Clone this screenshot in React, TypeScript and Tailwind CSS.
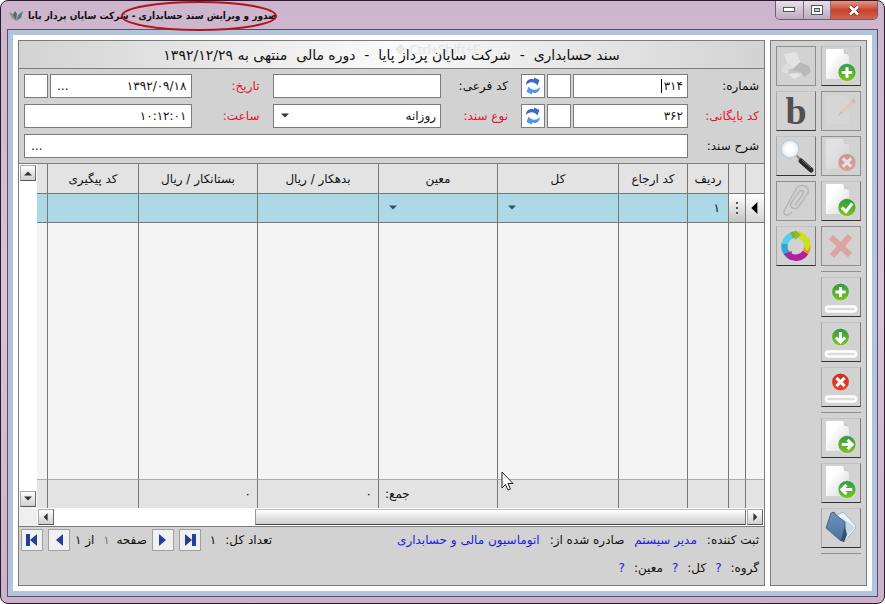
import type { ReactNode } from "react";

type Badge = "plus" | "check" | "cross" | "right" | "left" | "down";

function BadgeMark({ kind, cx, cy, r }: { kind: Badge; cx: number; cy: number; r: number }) {
  const red = kind === "cross";
  const k = r * 0.58;
  const d = {
    plus: `M${-k} 0H${k}M0 ${-k}V${k}`,
    check: `M${-k} 0L${-k * 0.2} ${k * 0.8}L${k} ${-k * 0.8}`,
    cross: `M${-k * 0.8} ${-k * 0.8}L${k * 0.8} ${k * 0.8}M${k * 0.8} ${-k * 0.8}L${-k * 0.8} ${k * 0.8}`,
    right: `M${-k} 0H${k}M${k * 0.1} ${-k * 0.9}L${k} 0L${k * 0.1} ${k * 0.9}`,
    left: `M${k} 0H${-k}M${-k * 0.1} ${-k * 0.9}L${-k} 0L${-k * 0.1} ${k * 0.9}`,
    down: `M0 ${-k}V${k}M${-k * 0.9} ${k * 0.1}L0 ${k}L${k * 0.9} ${k * 0.1}`,
  }[kind];
  return (
    <g transform={`translate(${cx} ${cy})`}>
      <circle r={r} fill={red ? "url(#badge-red)" : "url(#badge-green)"} stroke="#f4f4f4" strokeWidth="0.5" />
      <path d={d} fill="none" stroke="#fff" strokeWidth={r * 0.34} />
    </g>
  );
}

function DocIcon({ kind }: { kind: Badge }) {
  return (
    <svg width="38" height="38" viewBox="0 0 38 38" aria-hidden="true">
      <path d="M4 3Q4 2 5 2H21Q23 2 25 5Q27 7 27 10V32H4Z" fill="url(#paper)" />
      <path d="M21 2Q23 4 22 7Q25 6 27 9Q26 5 24 4Q23 2 21 2Z" fill="#c9c9c9" />
      <BadgeMark kind={kind} cx={25} cy={25.5} r={9} />
    </svg>
  );
}

function RowIcon({ kind }: { kind: Badge }) {
  return (
    <svg width="38" height="38" viewBox="0 0 38 38" aria-hidden="true">
      <BadgeMark kind={kind} cx={18.5} cy={14} r={8.8} />
      <rect x="4" y="28.500" width="30" height="5" rx="2.500" fill="#dcdcdc" stroke="#fff" strokeWidth="2.500" />
    </svg>
  );
}

function PrinterIcon() {
  return (
    <svg width="38" height="38" viewBox="0 0 38 38" aria-hidden="true">
      <path d="M7 7L19 5L24 16L17 21L11 18Z" fill="#e4e4e4" />
      <path d="M6 18L12 16L17 22L12 27L5 25Z" fill="#dedede" />
      <path d="M17 21L23 15L32 19L34 25L27 30L24 25L15 24Z" fill="#b7b9ba" />
      <path d="M12 22L17 21L15 24L24 25L20 29L11 27Z" fill="#c6c8c9" />
      <path d="M11 27L20 26L25 28L17 32Z" fill="#e6e6e6" />
    </svg>
  );
}

function PencilIcon() {
  return (
    <svg width="38" height="38" viewBox="0 0 38 38" aria-hidden="true">
      <path d="M4 3H22L27 8V32H4Z" fill="#d6d6d6" />
      <path d="M16 24L19 19L30 8L33 11L21 21Z" fill="#dfcbb5" />
      <path d="M16 24L19 19L21 21Z" fill="#c9bdb2" />
      <path d="M29 9L31 6L34 9L32 12Z" fill="#d0bdb8" />
    </svg>
  );
}

function SearchIcon() {
  return (
    <svg width="38" height="38" viewBox="0 0 38 38" aria-hidden="true">
      <path d="M19 18L24 23" stroke="#888" strokeWidth="2" />
      <path d="M24 24L34 33" stroke="#2b2b2b" strokeWidth="5" strokeLinecap="round" />
      <path d="M25 23L34 31" stroke="#777" strokeWidth="1" />
      <circle cx="13" cy="12" r="9" fill="url(#lens)" stroke="#c0ccd4" strokeWidth="1.400" />
    </svg>
  );
}

function ClipIcon() {
  return (
    <svg width="38" height="38" viewBox="0 0 38 38" aria-hidden="true">
      <path
        d="M7 29L19 7C22 1 33 3 31 11L22 24C19 29 12 26 14 21L22 10C24 7 28 9 26 12L18 23M7 29C6 34 12 34 15 30"
        fill="none"
        stroke="#b4b6b8"
        strokeWidth="1.500"
      />
    </svg>
  );
}

function WheelIcon() {
  return (
    <svg width="38" height="38" viewBox="0 0 38 38" aria-hidden="true">
      <g fill="none" strokeWidth="6.500">
        <path d="M19 7.500A11.500 11.500 0 0 1 30.500 19" stroke="#c8e01e" />
        <path d="M30.500 18.500A11.500 11.500 0 0 1 28.500 25.500" stroke="#e89a1c" />
        <path d="M28.500 25.500A11.500 11.500 0 0 1 12 28.500" stroke="#b01fa0" />
        <path d="M12 28.500A11.500 11.500 0 0 1 8 16" stroke="#35a6cf" />
        <path d="M8 17A11.500 11.500 0 0 1 15 8.500" stroke="#52d0ec" />
        <path d="M14.500 8.500A11.500 11.500 0 0 1 20 7.500" stroke="#78b23c" />
      </g>
      <path d="M18 3L24 8L18 13Z" fill="#8fbd2e" />
      <path d="M26 18H34L30 24Z" fill="#c8e01e" />
      <path d="M15 24L13 33L7 27Z" fill="#b01fa0" />
    </svg>
  );
}

function DeleteIcon() {
  return (
    <svg width="38" height="38" viewBox="0 0 38 38" aria-hidden="true">
      <path d="M9 10L28 28M28 9L10 29" stroke="#dda5a1" strokeWidth="6" fill="none" />
    </svg>
  );
}

function FolderIcon() {
  return (
    <svg width="38" height="38" viewBox="0 0 38 38" aria-hidden="true">
      <path d="M15 6L21 3L34 17L33 20L22 33Z" fill="#eef4f9" stroke="#9aabba" strokeWidth="0.800" />
      <path d="M19 8L33 18L23 29Z" fill="#c7d8e6" />
      <path d="M9 4L12 3L14 6L23 13L23 18L19 32L4 19Z" fill="url(#folder)" stroke="#37567a" strokeWidth="0.800" />
      <path d="M19 32L23 17L25 26L22 33Z" fill="#33506f" />
    </svg>
  );
}

function RefreshIcon() {
  return (
    <svg width="16" height="18" viewBox="0 0 16 18" aria-hidden="true">
      <path d="M1 8C1 3 5 1 9 2.500L9 0.500L14.500 3L12.500 8.500L10.500 6.500C7 4.500 4 5 1 8Z" fill="#3a6cc4" />
      <path d="M15 10C15 15 11 17 7 15.500L7 17.500L1.500 15L3.500 9.500L5.500 11.500C9 13.500 12 13 15 10Z" fill="#5596e8" />
    </svg>
  );
}

function Triangle({ dir, size, color }: { dir: "up" | "down" | "left" | "right"; size: number; color: string }) {
  const pts = { up: "0,8 5,3 10,8", down: "0,2 5,7 10,2", left: "7,0 2,5 7,10", right: "3,0 8,5 3,10" }[dir];
  return (
    <svg width={size} height={size} viewBox="0 0 10 10" aria-hidden="true" className="shrink-0">
      <polygon points={pts} fill={color} />
    </svg>
  );
}

function NavIcon({ dir, bar }: { dir: "left" | "right"; bar?: boolean }) {
  return (
    <svg width="16" height="16" viewBox="0 0 16 16" aria-hidden="true">
      <g fill="#21409a" transform={dir === "right" ? "translate(16 0) scale(-1 1)" : undefined}>
        {bar ? <path d="M2 2H6V14H2ZM13 2V14L6 8Z" /> : <path d="M12 2V14L5 8Z" />}
      </g>
    </svg>
  );
}

function ToolButton({ label, disabled, children }: { label: string; disabled?: boolean; children: ReactNode }) {
  return (
    <button
      type="button"
      aria-label={label}
      disabled={disabled}
      className={
        disabled
          ? "flex size-10 items-center justify-center border border-[#8f8f8f]"
          : "flex size-10 items-center justify-center border border-t-[#c2c2c2] border-r-[#777] border-b-[#333] border-l-[#a8a8a8]"
      }
    >
      {children}
    </button>
  );
}

const box = "h-6 border border-[#7b7b7b] bg-white";
const iconBox = "flex h-6 w-6 shrink-0 items-center justify-center border border-[#7b7b7b] bg-white";
const scrollBtn =
  "flex size-4 shrink-0 items-center justify-center border border-t-[#aaa] border-l-[#aaa] border-r-[#666] border-b-[#555] bg-linear-to-b from-white to-[#cfcfcf]";
const navBtn = "flex size-[22px] items-center justify-center border border-[#a0a0a0] bg-[#f0f0f0]";

const columns = [
  { title: "", width: "w-[19px]" },
  { title: "", width: "w-[17px]" },
  { title: "ردیف", width: "w-[41px]" },
  { title: "کد ارجاع", width: "w-[69px]" },
  { title: "کل", width: "w-[121px]" },
  { title: "معین", width: "w-auto" },
  { title: "بدهکار / ریال", width: "w-[121px]" },
  { title: "بستانکار / ریال", width: "w-[119px]" },
  { title: "کد پیگیری", width: "w-[91px]" },
  { title: "", width: "w-[10px]" },
];
const cell = "border-l border-[#777] p-0 last:border-l-0";

function Gradients() {
  return (
    <svg width="0" height="0" className="absolute" aria-hidden="true">
      <defs>
        <linearGradient id="badge-green" x1="0" y1="0" x2="0" y2="1">
          <stop offset="0" stopColor="#2f9a4a" />
          <stop offset="1" stopColor="#7fc31c" />
        </linearGradient>
        <linearGradient id="badge-red" x1="0" y1="0" x2="0" y2="1">
          <stop offset="0" stopColor="#cc2a2a" />
          <stop offset="1" stopColor="#e8442c" />
        </linearGradient>
        <linearGradient id="paper" x1="0" y1="0" x2="1" y2="1">
          <stop offset="0.300" stopColor="#fff" />
          <stop offset="1" stopColor="#d8d8d8" />
        </linearGradient>
        <radialGradient id="lens">
          <stop offset="0.400" stopColor="#fff" />
          <stop offset="1" stopColor="#dfe9f0" />
        </radialGradient>
        <linearGradient id="folder" x1="0" y1="0" x2="0" y2="1">
          <stop offset="0" stopColor="#6f93bb" />
          <stop offset="1" stopColor="#4a719f" />
        </linearGradient>
      </defs>
    </svg>
  );
}

function TitleBar() {
  return (
    <header dir="ltr" className="relative flex h-7 items-start justify-between">
      <div className="flex items-center gap-1 pt-[5px] pl-0.5">
        <svg width="15" height="14" viewBox="0 0 15 14" aria-hidden="true">
          <path d="M0 3L6 6L7 12L3 9Z" fill="#8a8a92" />
          <path d="M6 2L8 5L7 11L4 6Z" fill="#5e6068" />
          <path d="M14 2L12 9L7 12L9 6Z" fill="#4f7f80" />
        </svg>
        <h1 dir="rtl" className="font-['DejaVu_Sans_Condensed','DejaVu_Sans',sans-serif] text-[10px] leading-5 font-bold whitespace-nowrap">
          صدور و ویرایش سند حسابداری - شرکت سایان پرداز پایا
        </h1>
      </div>
      <svg width="158" height="32" viewBox="0 0 158 32" className="absolute top-0 left-[113px]" aria-hidden="true">
        <ellipse cx="79" cy="15" rx="77" ry="14" fill="none" stroke="#b3141c" strokeWidth="2" />
      </svg>
      <div className="flex h-[19px] overflow-hidden rounded-b-[5px] border border-t-0 border-[#6a5f6e]">
        <button type="button" aria-label="کوچک کردن" className="flex w-7 items-center justify-center border-r border-[#7c7080] bg-linear-to-b from-[#e9dfea] to-[#bdaabf]">
          <svg width="13" height="6" viewBox="0 0 13 6"><rect x="0.500" y="0.500" width="11" height="4" fill="#fff" stroke="#555" /></svg>
        </button>
        <button type="button" aria-label="بزرگ کردن" className="flex w-[27px] items-center justify-center border-r border-[#7c7080] bg-linear-to-b from-[#e9dfea] to-[#bdaabf]">
          <svg width="12" height="10" viewBox="0 0 12 10">
            <rect x="0.500" y="0.500" width="11" height="9" fill="#fff" stroke="#555" />
            <rect x="3.500" y="3.500" width="5" height="3" fill="#ccc" stroke="#555" />
          </svg>
        </button>
        <button type="button" aria-label="بستن" className="flex w-[46px] items-center justify-center bg-linear-to-b from-[#e2978a] via-[#c9412b] to-[#d4634a]">
          <svg width="12" height="11" viewBox="0 0 12 11">
            <path d="M2 1.500L10 9.500M10 1.500L2 9.500" stroke="#5a3a3a" strokeWidth="4" />
            <path d="M2 1.500L10 9.500M10 1.500L2 9.500" stroke="#fff" strokeWidth="2.500" />
          </svg>
        </button>
      </div>
    </header>
  );
}

function Toolbar() {
  return (
    <aside className="flex w-[97px] shrink-0 items-start gap-[5px] border border-[#7b7b7b] bg-[#d2d2d2] p-[5px]">
      <div className="flex flex-col gap-[5px]">
        <ToolButton label="سند جدید"><DocIcon kind="plus" /></ToolButton>
        <ToolButton label="ویرایش" disabled><PencilIcon /></ToolButton>
        <ToolButton label="ابطال" disabled><span className="opacity-35"><DocIcon kind="cross" /></span></ToolButton>
        <ToolButton label="تایید"><DocIcon kind="check" /></ToolButton>
        <ToolButton label="حذف" disabled><DeleteIcon /></ToolButton>
        <hr className="border-[#8f8f8f]" />
        <ToolButton label="افزودن ردیف"><RowIcon kind="plus" /></ToolButton>
        <ToolButton label="درج ردیف"><RowIcon kind="down" /></ToolButton>
        <ToolButton label="حذف ردیف"><RowIcon kind="cross" /></ToolButton>
        <hr className="border-[#8f8f8f]" />
        <ToolButton label="سند بعدی"><DocIcon kind="right" /></ToolButton>
        <ToolButton label="سند قبلی"><DocIcon kind="left" /></ToolButton>
        <ToolButton label="پوشه"><FolderIcon /></ToolButton>
        <hr className="border-[#8f8f8f]" />
      </div>
      <div className="flex flex-col gap-[5px]">
        <ToolButton label="چاپ" disabled><PrinterIcon /></ToolButton>
        <ToolButton label="بارکد">
          <span className="font-['Liberation_Serif',serif] text-[38px] leading-9 font-bold text-[#505050]">b</span>
        </ToolButton>
        <ToolButton label="جستجو"><SearchIcon /></ToolButton>
        <ToolButton label="پیوست" disabled><ClipIcon /></ToolButton>
        <ToolButton label="رنگ"><WheelIcon /></ToolButton>
      </div>
    </aside>
  );
}

function VoucherForm() {
  return (
    <form className="flex flex-col gap-1.5 px-[5px] py-[5px]">
      <div className="grid grid-cols-[238px_minmax(0,1fr)_minmax(0,1fr)] gap-x-[13px] gap-y-1.5">
        <div className="flex items-center gap-0.5">
          <label htmlFor="number" className="w-[69px] shrink-0">شماره:</label>
          <div className="relative min-w-0 flex-1">
            <input id="number" defaultValue="۳۱۴" className={`${box} block w-full px-1`} />
            <span className="absolute top-[5px] right-[26px] h-3.5 w-px bg-black" />
          </div>
          <input aria-label="پسوند شماره" className={`${box} w-6`} />
          <button type="button" aria-label="بازخوانی شماره" className={iconBox}><RefreshIcon /></button>
        </div>
        <div className="flex items-center">
          <label htmlFor="subcode" className="w-[67px] shrink-0">کد فرعی:</label>
          <input id="subcode" className={`${box} min-w-0 flex-1 px-1`} />
        </div>
        <div className="flex items-center">
          <label htmlFor="date" className="w-[68px] shrink-0 text-[#e8112d]">تاریخ:</label>
          <div className={`${box} flex min-w-0 flex-1 items-center`}>
            <input id="date" defaultValue="۱۳۹۲/۰۹/۱۸" className="min-w-0 flex-1 px-1" />
            <button type="button" aria-label="انتخاب تاریخ" className="px-1.5">...</button>
          </div>
          <input aria-label="پسوند تاریخ" className={`${box} mr-0.5 w-6`} />
        </div>

        <div className="flex items-center gap-0.5">
          <label htmlFor="archive" className="w-[69px] shrink-0 text-[#e8112d]">کد بایگانی:</label>
          <input id="archive" defaultValue="۳۶۲" className={`${box} min-w-0 flex-1 px-1`} />
          <input aria-label="پسوند بایگانی" className={`${box} w-6`} />
          <button type="button" aria-label="بازخوانی بایگانی" className={iconBox}><RefreshIcon /></button>
        </div>
        <div className="flex items-center">
          <label htmlFor="kind" className="w-[67px] shrink-0 text-[#e8112d]">نوع سند:</label>
          <div className="relative min-w-0 flex-1">
            <select id="kind" className={`${box} block w-full appearance-none px-1`}>
              <option>روزانه</option>
            </select>
            <span className="pointer-events-none absolute top-2 left-2"><Triangle dir="down" size={8} color="#333" /></span>
          </div>
        </div>
        <div className="flex items-center">
          <label htmlFor="time" className="w-[68px] shrink-0 text-[#e8112d]">ساعت:</label>
          <input id="time" defaultValue="۱۰:۱۲:۰۱" className={`${box} min-w-0 flex-1 px-1`} />
        </div>
      </div>
      <div className="flex items-center gap-0.5">
        <label htmlFor="desc" className="w-[69px] shrink-0">شرح سند:</label>
        <div className={`${box} flex min-w-0 flex-1 items-center`}>
          <input id="desc" className="min-w-0 flex-1 px-1" />
          <button type="button" aria-label="انتخاب شرح" className="px-1.5">...</button>
        </div>
      </div>
    </form>
  );
}

function VoucherGrid() {
  return (
    <section className="flex flex-1 border-y border-[#7b7b7b] bg-white">
      <div className="flex min-w-0 flex-1 flex-col">
        <div className="grid flex-1">
          <table className="w-full table-fixed border-separate border-spacing-0">
            <thead className="bg-[#e3e3e3]">
              <tr className="h-[30px]">
                {columns.map((c, i) => (
                  <th key={i} className={`${cell} ${c.width} border-b text-center font-normal`}>{c.title}</th>
                ))}
              </tr>
            </thead>
            <tbody>
              <tr className="h-[29px] bg-[#add8e6]">
                <td className={`${cell} border-b bg-linear-to-b from-white to-[#d5d5d5]`}>
                  <span className="flex justify-center"><Triangle dir="left" size={12} color="#000" /></span>
                </td>
                <td className={`${cell} border-b bg-linear-to-b from-white to-[#c4c4c4]`}>
                  <span className="flex flex-col items-center gap-[3px]">
                    <i className="size-0.5 bg-[#555]" /><i className="size-0.5 bg-[#555]" /><i className="size-0.5 bg-[#555]" />
                  </span>
                </td>
                <td className={`${cell} border-b`}><span className="px-2">۱</span></td>
                <td className={`${cell} border-b`} />
                {[0, 1].map((i) => (
                  <td key={i} className={`${cell} border-b`}>
                    <span className="flex justify-end px-2.5"><Triangle dir="down" size={8} color="#34515c" /></span>
                  </td>
                ))}
                <td className={`${cell} border-b`} />
                <td className={`${cell} border-b`} />
                <td className={`${cell} border-b`} />
                <td className={`${cell} border-b`} />
              </tr>
              <tr className="bg-[#f4f4f4]">
                {columns.map((_, i) => <td key={i} className={cell} />)}
              </tr>
            </tbody>
            <tfoot className="bg-[#e3e3e3]">
              <tr className="h-[29px]">
                {columns.map((_, i) => (
                  <td key={i} className={`${cell} border-t border-t-[#aaa]`}>
                    {i === 5 && <span className="flex justify-end px-1.5">جمع:</span>}
                    {(i === 6 || i === 7) && <span className="px-1.5">۰</span>}
                  </td>
                ))}
              </tr>
            </tfoot>
          </table>
        </div>
        <div className="flex h-[18px] items-center gap-px px-px">
          <button type="button" aria-label="پیمایش به راست" className={scrollBtn}><Triangle dir="right" size={8} color="#333" /></button>
          <div className="flex-1">
            <div className="h-4 w-[71%] border border-t-[#bbb] border-r-[#777] border-b-[#444] border-l-[#999] bg-linear-to-b from-white to-[#cfcfcf]" />
          </div>
          <button type="button" aria-label="پیمایش به چپ" className={scrollBtn}><Triangle dir="left" size={8} color="#333" /></button>
        </div>
      </div>
      <div className="flex w-[18px] flex-col items-center pt-px">
        <button type="button" aria-label="پیمایش به بالا" className={scrollBtn}><Triangle dir="up" size={8} color="#333" /></button>
        <div className="flex-1" />
        <button type="button" aria-label="پیمایش به پایین" className={scrollBtn}><Triangle dir="down" size={8} color="#333" /></button>
        <div className="h-[19px] w-full bg-[#efefef]" />
      </div>
    </section>
  );
}

function StatusBar() {
  return (
    <footer className="flex h-[58px] items-start justify-between pt-0.5 pr-[5px] pl-0.5">
      <div className="flex flex-col gap-1.5">
        <p className="flex h-[22px] items-center gap-2.5 whitespace-nowrap">
          <span>ثبت کننده:</span>
          <span className="text-[#1a1ae0]">مدیر سیستم</span>
          <span>صادره شده از:</span>
          <span className="text-[#1a1ae0]">اتوماسیون مالی و حسابداری</span>
        </p>
        <p className="flex h-[22px] items-center gap-[9px]">
          <span>گروه:</span><span className="text-[#1a1ae0]">?</span>
          <span>کل:</span><span className="text-[#1a1ae0]">?</span>
          <span>معین:</span><span className="text-[#1a1ae0]">?</span>
        </p>
      </div>
      <nav className="flex h-[22px] items-center gap-[5px] whitespace-nowrap" aria-label="صفحه بندی">
        <span>تعداد کل:</span>
        <span className="px-1">۱</span>
        <button type="button" aria-label="آخرین صفحه" className={navBtn}><NavIcon dir="right" bar /></button>
        <button type="button" aria-label="صفحه بعد" className={navBtn}><NavIcon dir="right" /></button>
        <label htmlFor="page">صفحه</label>
        <input id="page" defaultValue="۱" className="w-2.5 bg-transparent text-center text-[#777]" />
        <span className="pr-0.5">از ۱</span>
        <button type="button" aria-label="صفحه قبل" className={navBtn}><NavIcon dir="left" /></button>
        <button type="button" aria-label="اولین صفحه" className={navBtn}><NavIcon dir="left" bar /></button>
      </nav>
    </footer>
  );
}

export default function App() {
  return (
    <div
      dir="rtl"
      className="relative flex min-h-screen flex-col rounded-lg border border-[#2a1a2c] bg-linear-to-b from-[#cdb5cd] via-[#d9c3d6] to-[#cbb2ca] px-1.5 pb-1.5 font-['DejaVu_Sans',sans-serif] text-xs leading-4 text-[#111]"
    >
      <Gradients />
      <TitleBar />
      <main className="flex flex-1 border border-[#5e4a66] bg-[#b0c4da] p-[5px]">
        <div className="flex min-w-0 flex-1 gap-[5px] bg-white p-[5px]">
          <Toolbar />
          <div className="flex min-w-0 flex-1 flex-col border border-[#7b7b7b] bg-[#d2d2d2]">
            <div className="relative flex h-[28px] items-center justify-center border-b border-[#7b7b7b] bg-linear-to-r from-[#d3d3d3] via-[#fafafa] to-[#d3d3d3]">
              <span dir="ltr" className="absolute top-0 left-[376px] font-['Open_Sans',sans-serif] text-[13px] text-[#e2e2e2]">✥ Ctrl+Shift+F</span>
              <h2 className="relative text-[14px] whitespace-pre">
                سند حسابداری  -  شرکت سایان پرداز پایا  -  دوره مالی  منتهی به ۱۳۹۲/۱۲/۲۹
              </h2>
            </div>
            <VoucherForm />
            <VoucherGrid />
            <StatusBar />
          </div>
        </div>
      </main>
      <svg width="13" height="20" viewBox="0 0 13 20" className="pointer-events-none absolute top-[470px] left-[500px]" aria-hidden="true">
        <path d="M1 1V17L4.500 13.500L7 19L9.500 18L7 12.500H12Z" fill="#fff" stroke="#222" />
      </svg>
    </div>
  );
}
